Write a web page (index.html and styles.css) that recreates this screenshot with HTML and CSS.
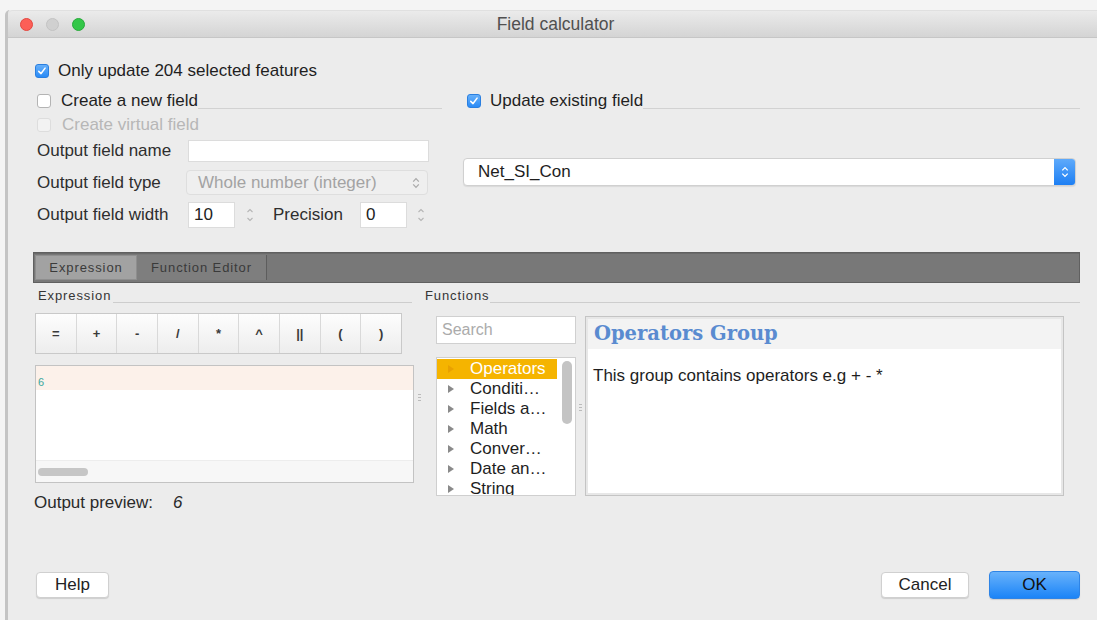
FILE: index.html
```html
<!DOCTYPE html>
<html lang="en">
<head>
<meta charset="utf-8">
<title>Field calculator</title>
<link rel="stylesheet" href="styles.css">
</head>
<body>
<div class="window">
  <header class="titlebar">
    <div class="lights">
      <span class="light close"></span>
      <span class="light mini"></span>
      <span class="light zoom"></span>
    </div>
    <div class="title">Field calculator</div>
    <div></div>
  </header>

  <main class="content">
    <div class="check-row only">
      <span class="cb on"><svg viewBox="0 0 14 14" width="12" height="12"><path d="M3.2 7.4 L5.9 10 L10.6 3.6" fill="none" stroke="#fff" stroke-width="1.8" stroke-linecap="round" stroke-linejoin="round"/></svg></span>
      <span>Only update 204 selected features</span>
    </div>

    <div class="top">
      <section class="col-new">
        <div class="group-head new-head">
          <span class="cb"></span>
          <span class="head-text">Create a new field</span>
          <span class="rule"></span>
        </div>
        <div class="check-row virtual">
          <span class="cb dis"></span>
          <span>Create virtual field</span>
        </div>
        <div class="form-row row-name">
          <span class="lbl">Output field name</span>
          <span class="field name-field"></span>
        </div>
        <div class="form-row row-type">
          <span class="lbl">Output field type</span>
          <span class="select dis-select">
            <span>Whole number (integer)</span>
            <svg width="8" height="12" viewBox="0 0 8 12"><path d="M1.2 4.6 L4 1.6 L6.8 4.6 M1.2 7.4 L4 10.4 L6.8 7.4" fill="none" stroke="#a9a9a9" stroke-width="1.2"/></svg>
          </span>
        </div>
        <div class="form-row row-width">
          <span class="lbl">Output field width</span>
          <span class="field spin">10</span>
          <span class="stepper"><svg width="8" height="20" viewBox="0 0 8 20"><path d="M1.5 7 L4 4.5 L6.5 7 M1.5 13 L4 15.5 L6.5 13" fill="none" stroke="#b5b5b5" stroke-width="1.1"/></svg></span>
          <span class="lbl prec">Precision</span>
          <span class="field spin">0</span>
          <span class="stepper"><svg width="8" height="20" viewBox="0 0 8 20"><path d="M1.5 7 L4 4.5 L6.5 7 M1.5 13 L4 15.5 L6.5 13" fill="none" stroke="#b5b5b5" stroke-width="1.1"/></svg></span>
        </div>
      </section>

      <section class="col-existing">
        <div class="group-head upd-head">
          <span class="cb on"><svg viewBox="0 0 14 14" width="12" height="12"><path d="M3.2 7.4 L5.9 10 L10.6 3.6" fill="none" stroke="#fff" stroke-width="1.8" stroke-linecap="round" stroke-linejoin="round"/></svg></span>
          <span class="head-text">Update existing field</span>
          <span class="rule"></span>
        </div>
        <div class="select field-select">
          <span class="sel-text">Net_SI_Con</span>
          <span class="blue-step"><svg width="8" height="14" viewBox="0 0 8 14"><path d="M1.3 5.4 L4 2.6 L6.7 5.4 M1.3 8.6 L4 11.4 L6.7 8.6" fill="none" stroke="#fff" stroke-width="1.3"/></svg></span>
        </div>
      </section>
    </div>

    <nav class="tabbar">
      <span class="tab active">Expression</span>
      <span class="tab">Function Editor</span>
    </nav>

    <div class="editor-area">
      <section class="expr-col">
        <div class="box-title"><span>Expression</span><span class="rule"></span></div>
        <div class="ops">
          <button>=</button>
          <button>+</button>
          <button>-</button>
          <button>/</button>
          <button>*</button>
          <button>^</button>
          <button>||</button>
          <button>(</button>
          <button>)</button>
        </div>
        <div class="editor">
          <div class="code-line current"><span class="num">6</span></div>
          <div class="code-fill"></div>
          <div class="hscroll"><span class="thumb"></span></div>
        </div>
        <div class="preview"><span>Output preview:</span><em>6</em></div>
      </section>

      <div class="splitter"><span class="grip"></span></div>

      <section class="func-col">
        <div class="box-title"><span>Functions</span><span class="rule"></span></div>
        <div class="func-body">
          <div class="func-left">
            <div class="search">Search</div>
            <div class="tree">
              <ul>
                <li class="sel"><svg width="6" height="8" viewBox="0 0 6 8"><path d="M0 0 L6 4 L0 8 Z" fill="#e9a100"/></svg><span>Operators</span></li>
                <li><svg width="6" height="8" viewBox="0 0 6 8"><path d="M0 0 L6 4 L0 8 Z" fill="#8a8a8a"/></svg><span>Conditi…</span></li>
                <li><svg width="6" height="8" viewBox="0 0 6 8"><path d="M0 0 L6 4 L0 8 Z" fill="#8a8a8a"/></svg><span>Fields a…</span></li>
                <li><svg width="6" height="8" viewBox="0 0 6 8"><path d="M0 0 L6 4 L0 8 Z" fill="#8a8a8a"/></svg><span>Math</span></li>
                <li><svg width="6" height="8" viewBox="0 0 6 8"><path d="M0 0 L6 4 L0 8 Z" fill="#8a8a8a"/></svg><span>Conver…</span></li>
                <li><svg width="6" height="8" viewBox="0 0 6 8"><path d="M0 0 L6 4 L0 8 Z" fill="#8a8a8a"/></svg><span>Date an…</span></li>
                <li><svg width="6" height="8" viewBox="0 0 6 8"><path d="M0 0 L6 4 L0 8 Z" fill="#8a8a8a"/></svg><span>String</span></li>
              </ul>
              <div class="vscroll"><span class="thumb"></span></div>
            </div>
          </div>
          <div class="mid-split"><span class="grip"></span></div>
          <div class="help-panel">
            <h2>Operators Group</h2>
            <p>This group contains operators e.g + - *</p>
          </div>
        </div>
      </section>
    </div>

    <footer class="buttons">
      <button class="btn help">Help</button>
      <span class="spacer"></span>
      <button class="btn cancel">Cancel</button>
      <button class="btn ok">OK</button>
    </footer>
  </main>
</div>
</body>
</html>
```

FILE: styles.css
```css
* { box-sizing: border-box; }

html, body {
  margin: 0;
  height: 100%;
  overflow: hidden;
}

body {
  background: #f4f4f4;
  padding: 10px 0 0 5px;
  font-family: "Liberation Sans", Arial, Helvetica, sans-serif;
  font-size: 17px;
  color: #1f1f1f;
}

/* window frame */
.window {
  width: 1102px;
  height: 610px;
  background: #ececec;
  border-left: 3px solid #c4c4c4;
  border-radius: 5px 0 0 0;
}

.titlebar {
  height: 28px;
  display: grid;
  grid-template-columns: 1fr auto 1fr;
  align-items: center;
  background: linear-gradient(#ebebeb, #d4d4d4);
  border-bottom: 1px solid #c6c6c6;
  border-top: 1px solid #e0e0e0;
  border-radius: 5px 0 0 0;
}

.lights {
  display: flex;
  gap: 13px;
  padding-left: 12px;
}

.light {
  width: 13px;
  height: 13px;
  border-radius: 50%;
}
.light.close { background: #fc5f57; border: 1px solid #e4473f; }
.light.mini  { background: #d0d0d0; border: 1px solid #c3c3c3; }
.light.zoom  { background: #33c748; border: 1px solid #27aa3a; }

.title {
  font-size: 17.5px;
  color: #505050;
  padding-right: 4px;
}

/* dialog body */
.content {
  padding: 23px 27px 0 27px;
}

.check-row {
  display: flex;
  align-items: center;
  height: 20px;
}

.only { gap: 9px; }

.cb {
  flex: none;
  width: 14px;
  height: 14px;
  border-radius: 3px;
  background: #fff;
  border: 1px solid #b4b4b4;
  display: inline-flex;
  align-items: center;
  justify-content: center;
}
.cb.on {
  background: linear-gradient(#67b0fa, #2a8bf6);
  border-color: #2a7fe0;
}
.cb.dis {
  background: #f2f2f2;
  border-color: #dddddd;
}

.top {
  margin-top: 10px;
  display: grid;
  grid-template-columns: 407px 617px;
  column-gap: 21px;
}

.group-head {
  display: flex;
  align-items: center;
  height: 20px;
}
.rule {
  flex: 1;
  align-self: flex-end;
  border-bottom: 1px solid #d2d2d2;
  margin-bottom: 2px;
}
.new-head .cb { margin-left: 2px; }
.new-head .head-text { margin-left: 10px; }
.upd-head .cb { margin-left: 4px; }
.upd-head .head-text { margin-left: 9px; }

.virtual { margin-top: 4px; color: #b7b7b7; }
.virtual .cb { margin-left: 2px; }
.virtual span:last-child { margin-left: 11px; }

.form-row {
  display: flex;
  align-items: center;
}
.lbl {
  flex: none;
  padding-left: 2px;
  color: #2e2e2e;
}

.field {
  flex: none;
  height: 100%;
  background: #fff;
  border: 1px solid #dcdcdc;
  display: flex;
  align-items: center;
}

.row-name { margin-top: 5px; height: 22px; }
.row-name .lbl { width: 153px; }
.name-field { width: 241px; }

.row-type { margin-top: 8px; height: 25px; }
.row-type .lbl { width: 151px; }

.select {
  display: flex;
  align-items: center;
  justify-content: space-between;
  border-radius: 4px;
}
.dis-select {
  width: 242px;
  height: 100%;
  padding: 0 7px 0 11px;
  background: #efefef;
  border: 1px solid #dedede;
  color: #a3a3a3;
}

.row-width { margin-top: 7px; height: 26px; }
.row-width .lbl { width: 153px; }
.spin {
  width: 47px;
  padding-left: 5px;
  color: #222;
}
.stepper {
  flex: none;
  width: 12px;
  margin-left: 9px;
  display: flex;
  justify-content: center;
}
.row-width .prec {
  width: 87px;
  margin-left: 17px;
  padding-left: 0;
}
.row-width .stepper:last-child { margin-left: 8px; }

.field-select {
  margin-top: 47px;
  width: 613px;
  height: 28px;
  background: #fff;
  border: 1px solid #d0d0d0;
  box-shadow: 0 1px 1px rgba(0, 0, 0, 0.08);
  overflow: hidden;
}
.sel-text { padding-left: 14px; color: #1e1e1e; }
.blue-step {
  width: 21px;
  height: 100%;
  background: linear-gradient(#5eaafb, #1d7ff3);
  display: flex;
  align-items: center;
  justify-content: center;
}

/* tab strip */
.tabbar {
  margin: 24px 0 0 -2px;
  height: 31px;
  background: #787878;
  border: 1px solid #606060;
  box-shadow: inset 0 1px 0 #6a6a6a;
  display: flex;
  align-items: flex-end;
  padding: 0 0 2px 1px;
}
.tab {
  height: 25px;
  display: flex;
  align-items: center;
  justify-content: center;
  font-size: 13px;
  letter-spacing: 0.9px;
  color: #3a3a3a;
}
.tab.active {
  width: 102px;
  background: #a2a2a2;
  border: 1px solid #8e8e8e;
}
.tab:not(.active) {
  width: 130px;
  background: #7e7e7e;
  border-right: 1px solid #5d5d5d;
}

/* expression + functions */
.editor-area {
  margin-top: 4px;
  display: grid;
  grid-template-columns: 379px 11px 1fr;
}

.box-title {
  display: flex;
  align-items: center;
  height: 16px;
  font-size: 13px;
  letter-spacing: 0.9px;
  color: #353535;
}
.box-title .rule { margin-left: 2px; margin-bottom: 0; border-color: #cdcdcd; }
.expr-col .box-title { padding-left: 3px; margin-right: 2px; }

.ops {
  margin-top: 10px;
  width: 367px;
  height: 41px;
  display: grid;
  grid-template-columns: repeat(9, 1fr);
  gap: 1px;
  background: #d9d9d9;
  border: 1px solid #c9c9c9;
}
.ops button {
  border: 0;
  background: linear-gradient(#fdfdfd, #ededed);
  font-family: "Liberation Sans", Arial, sans-serif;
  font-size: 13px;
  font-weight: bold;
  color: #3a3a3a;
  padding: 0;
}

.editor {
  margin-top: 11px;
  height: 118px;
  background: #fff;
  border: 1px solid #c3c3c3;
  display: flex;
  flex-direction: column;
}
.current {
  height: 24px;
  background: #fcf1ea;
  padding: 5px 0 0 2px;
}
.num {
  font-size: 11px;
  color: #3aa79d;
}
.code-fill { flex: 1; }
.hscroll {
  height: 22px;
  background: #f7f7f7;
  border-top: 1px solid #ededed;
  padding: 7px 2px;
}
.hscroll .thumb {
  display: block;
  width: 50px;
  height: 8px;
  border-radius: 4px;
  background: #c6c6c6;
}

.preview {
  margin-top: 10px;
  height: 20px;
  display: flex;
  align-items: center;
  color: #2a2a2a;
}
.preview span { margin-left: -1px; }
.preview em { margin-left: 20px; }

.splitter { display: flex; justify-content: center; }
.grip {
  display: block;
  width: 3px;
  height: 8px;
  background: repeating-linear-gradient(#bbbbbb 0 1px, transparent 1px 3px);
}
.splitter .grip { margin-top: 107px; }

.func-col .box-title .rule { margin-left: 1px; }

.func-body {
  margin: 13px 0 0 11px;
  display: grid;
  grid-template-columns: 140px 9px 479px;
}

.search {
  height: 28px;
  background: #fff;
  border: 1px solid #d0d0d0;
  padding-left: 5px;
  line-height: 26px;
  font-size: 16px;
  color: #ababab;
}

.tree {
  margin-top: 13px;
  height: 139px;
  background: #fff;
  border: 1px solid #cfcfcf;
  display: flex;
  overflow: hidden;
}
.tree ul {
  list-style: none;
  margin: 0;
  padding: 1px 0 0 0;
  width: 120px;
  flex: none;
}
.tree li {
  height: 20px;
  display: flex;
  align-items: center;
  white-space: nowrap;
  color: #1e1e1e;
}
.tree li svg { margin-left: 11px; flex: none; }
.tree li span { margin-left: 16px; }
.tree li.sel {
  background: #f5b400;
  color: #fff;
}
.vscroll {
  margin-left: 5px;
  width: 10px;
  flex: none;
  padding-top: 3px;
}
.vscroll .thumb {
  display: block;
  height: 63px;
  border-radius: 5px;
  background: #c4c4c4;
}

.mid-split { display: flex; justify-content: center; }
.mid-split .grip { margin-top: 88px; }

.help-panel {
  height: 180px;
  background: #fff;
  border: 1px solid #c4c4c4;
  box-shadow: inset 0 0 0 2px #e7e7e7;
  padding: 2px;
}
.help-panel h2 {
  margin: 0;
  height: 30px;
  line-height: 30px;
  padding-left: 6px;
  background: #f3f3f3;
  font-family: "DejaVu Serif", "Liberation Serif", serif;
  font-size: 19.5px;
  font-weight: bold;
  color: #5a8bd0;
}
.help-panel p {
  margin: 17px 0 0 5px;
  line-height: 20px;
  color: #1e1e1e;
}

/* dialog buttons */
.buttons {
  margin-top: 58px;
  height: 28px;
  display: flex;
  align-items: center;
}
.spacer { flex: 1; }
.btn {
  height: 26px;
  background: #fff;
  border: 1px solid #d0d0d0;
  border-radius: 4px;
  box-shadow: 0 1px 1px rgba(0, 0, 0, 0.13);
  font-family: "Liberation Sans", Arial, sans-serif;
  font-size: 17px;
  color: #222;
  padding: 0;
}
.btn.help { width: 73px; margin-left: 1px; }
.btn.cancel { width: 88px; }
.btn.ok {
  width: 91px;
  height: 28px;
  margin-left: 20px;
  background: linear-gradient(#68b2fb, #1b84f7);
  border-color: #2e84e6;
  color: #111;
}
```
